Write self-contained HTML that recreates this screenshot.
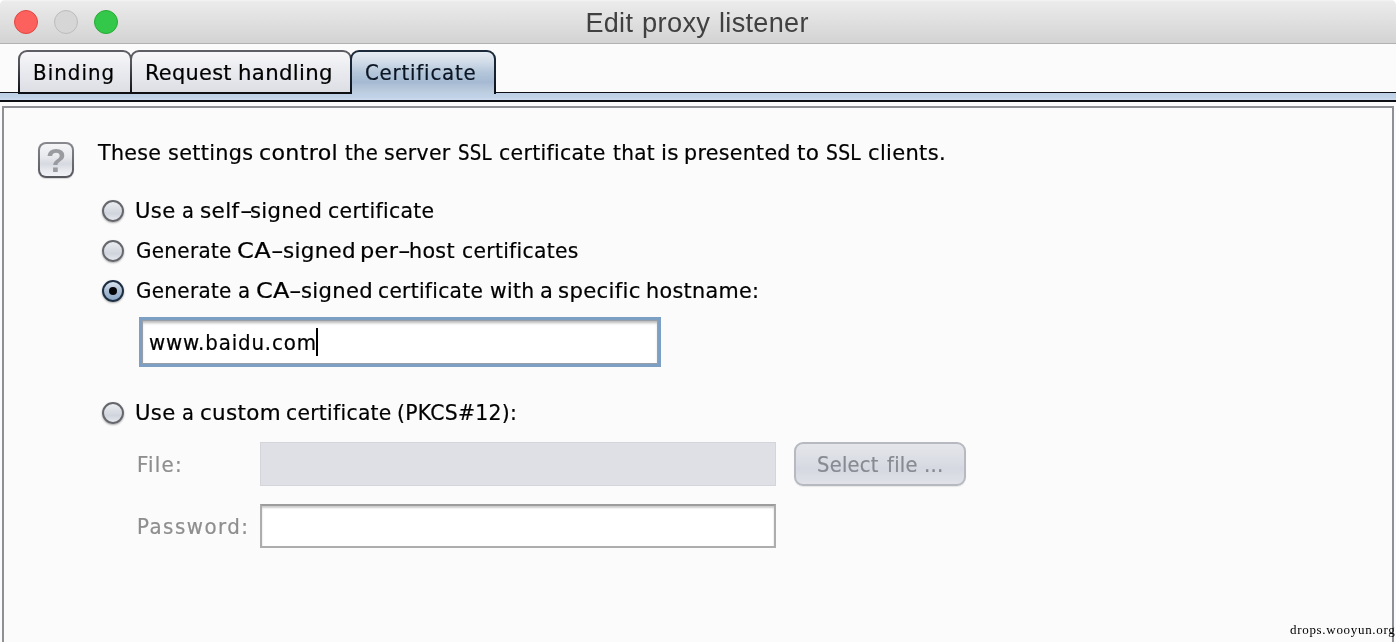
<!DOCTYPE html>
<html lang="en">
<head>
<meta charset="utf-8">
<title>Edit proxy listener</title>
<style>
html,body{margin:0;padding:0;}
body{width:1396px;height:642px;overflow:hidden;background:#fff;position:relative;
  font-family:"DejaVu Sans Condensed","Liberation Sans",sans-serif;font-size:22px;color:#000;}
#win{position:absolute;left:0;top:0;width:1396px;height:642px;background:#fbfbfb;border-radius:5px 5px 0 0;overflow:hidden;}
.abs{position:absolute;white-space:nowrap;}
.abs,.tab>span,#btn>span,#help span{will-change:transform;}
/* title bar */
#titlebar{position:absolute;left:0;top:0;width:1396px;height:43px;
  background:linear-gradient(#f4f4f4 0,#ebebeb 2px,#d3d3d3 100%);border-bottom:1px solid #b1b1b1;}
.light{position:absolute;top:10px;width:22px;height:22px;border-radius:50%;border:1px solid;}
#l-red{left:14px;background:#fc615d;border-color:#e1463f;}
#l-gray{left:54px;background:#d6d6d6;border-color:#bcbcbc;}
#l-green{left:94px;background:#34c84a;border-color:#27aa35;}
#title{top:6px;height:34px;line-height:34px;
  font-family:"Liberation Sans",sans-serif;font-size:27px;color:#404040;}
/* tabs */
.tab{position:absolute;top:50px;height:43px;box-sizing:border-box;border:2px solid transparent;border-bottom:none;
  border-radius:9px 9px 0 0;
  background:linear-gradient(#f7f7f9 0,#eaebef 45%,#dddee4 100%) padding-box,
             linear-gradient(#5d5f65 0,#54565c 30%,#2a2c32 70%,#0d0f14 100%) border-box;}
.tab>span{position:absolute;white-space:nowrap;top:7px;line-height:28px;}
#tab1{left:18px;width:114px;}
#tab2{left:130px;width:222px;}
#tab3{left:350px;width:146px;height:44px;color:#0a1422;
  background:linear-gradient(#e6ecf3 0,#d0dbe8 25%,#b3c5d9 50%,#a5bad2 72%,#b9c9dc 90%,#c0d0e3 100%) padding-box,
             linear-gradient(#1b2b3d 0,#16222f 60%,#0b0f16 100%) border-box;}
#tabline{position:absolute;left:0;top:92px;width:1396px;height:1px;background:#0d0f14;}
#tabline2{position:absolute;left:18px;top:93px;width:334px;height:1px;background:#0d0f14;}
#strip{position:absolute;left:0;top:93px;width:1396px;height:7px;background:linear-gradient(#bccfe5 0,#c1d2e7 60%,#cddaee 100%);}
#stripline{position:absolute;left:0;top:100px;width:1396px;height:2px;background:#0c0e14;}
#panel{position:absolute;left:2px;top:106px;width:1392px;height:560px;border:2px solid #8e9096;box-sizing:border-box;background:#fbfbfb;}
/* help button */
#help{position:absolute;left:38px;top:142px;width:36px;height:36px;box-sizing:border-box;border:2px solid transparent;border-radius:8px;
  background:linear-gradient(#f5f5f7 0,#e7e9ed 40%,#d6d9e0 62%,#e9ebf0 85%,#f1f2f6 100%) padding-box,
             linear-gradient(#888a90 0,#72747a 40%,#55575d 100%) border-box;box-shadow:0 1px 1px rgba(0,0,0,.15);}
#help span{position:absolute;left:0;right:0;top:1px;text-align:center;font-family:"Liberation Sans",sans-serif;font-weight:bold;font-size:33px;line-height:32px;color:#9a9ba0;filter:blur(.6px);}
/* radios */
.radio{position:absolute;left:102px;width:22px;height:22px;box-sizing:border-box;border:2px solid #65676d;border-radius:50%;
  background:linear-gradient(#eceef1 0,#dcdfe5 35%,#d0d4dc 65%,#e6e8ed 100%);box-shadow:0 1px 2px rgba(0,0,0,.32);}
.radio.on{border-color:#1d2e42;background:linear-gradient(#dbe4ee 0,#a9bdd3 50%,#8ca8c5 100%);}
.radio.on i{position:absolute;left:5px;top:5px;width:8px;height:8px;border-radius:50%;background:#050608;}
.lbl{line-height:28px;}
.lbl,.tab>span,#btn>span{-webkit-text-stroke:.22px currentColor;}
.dis{color:#8e8e8e;}
.w{position:absolute;top:0;transform-origin:0 50%;}
.hy{letter-spacing:0;}
/* fields */
#host{position:absolute;left:139px;top:317px;width:522px;height:50px;box-sizing:border-box;border:3px solid #7c9fc3;background:#fff;
  box-shadow:inset 0 0 0 1px #9a9ea6, inset 0 3px 3px rgba(0,0,0,.28);}
#caret{position:absolute;left:316px;top:328px;width:2px;height:28px;background:#000;}
#file{position:absolute;left:260px;top:442px;width:516px;height:44px;box-sizing:border-box;border:1px solid #d3d5da;background:#dee0e5;}
#pwd{position:absolute;left:260px;top:504px;width:516px;height:44px;box-sizing:border-box;border:2px solid #adadad;border-top-color:#9c9c9c;background:#fff;
  box-shadow:inset 0 2px 2px rgba(0,0,0,.2);}
#btn{position:absolute;left:794px;top:442px;width:172px;height:44px;box-sizing:border-box;border:2px solid #b7b9c1;border-radius:9px;
  background:linear-gradient(#e4e6eb 0,#d9dce3 50%,#d5d8e0 60%,#e0e2e8 100%);box-shadow:0 1px 1px rgba(0,0,0,.08);}
#btn>span{position:absolute;white-space:nowrap;top:7px;line-height:28px;color:#888a91;}
#wm{top:622px;font-family:"Liberation Serif",serif;font-size:13px;line-height:16px;color:#000;}
</style>
</head>
<body>
<div id="win">
  <div id="titlebar">
    <div class="light" id="l-red"></div>
    <div class="light" id="l-gray"></div>
    <div class="light" id="l-green"></div>
    <div class="abs" id="title" style="left:0px;letter-spacing:0.3px;"><span class="w" style="left:585.47px;transform:scaleX(1.000)">Edit</span> <span class="w" style="left:641.54px;transform:scaleX(1.012)">proxy</span> <span class="w" style="left:718.72px;transform:scaleX(1.003)">listener</span></div>
  </div>

  <div id="strip"></div>
  <div id="stripline"></div>
  <div class="tab" id="tab1"><span id="tb1" style="left:13.30px;letter-spacing:1.053px;">Binding</span></div>
  <div class="tab" id="tab2"><span id="tb2" style="left:0px;letter-spacing:0.3px;"><span class="w" style="left:13.47px;transform:scaleX(1.054)">Request</span> <span class="w" style="left:105.71px;transform:scaleX(1.074)">handling</span></span></div>
  <div id="tabline"></div>
  <div id="tabline2"></div>
  <div class="tab" id="tab3"><span id="tb3" style="left:13.44px;letter-spacing:0.793px;">Certificate</span></div>

  <div id="panel"></div>

  <div id="help"><span>?</span></div>
  <div class="abs lbl" id="t0" style="left:0px;letter-spacing:0.3px;top:139px;"><span class="w" style="left:97.91px;transform:scaleX(1.040)">These</span> <span class="w" style="left:168.37px;transform:scaleX(1.049)">settings</span> <span class="w" style="left:259.31px;transform:scaleX(1.118)">control</span> <span class="w" style="left:344.87px;transform:scaleX(0.987)">the</span> <span class="w" style="left:383.93px;transform:scaleX(1.032)">server</span> <span class="w" style="left:457.66px;transform:scaleX(0.914)">SSL</span> <span class="w" style="left:499.29px;transform:scaleX(1.033)">certificate</span> <span class="w" style="left:612.57px;transform:scaleX(1.012)">that</span> <span class="w" style="left:661.18px;transform:scaleX(1.094)">is</span> <span class="w" style="left:684.27px;transform:scaleX(1.040)">presented</span> <span class="w" style="left:797.25px;transform:scaleX(1.091)">to</span> <span class="w" style="left:826.20px;transform:scaleX(0.945)">SSL</span> <span class="w" style="left:868.09px;transform:scaleX(1.062)">clients.</span></div>

  <div class="radio" style="top:200px"></div>
  <div class="abs lbl" id="t1" style="left:0px;letter-spacing:0.3px;top:197px;"><span class="w" style="left:135.07px;transform:scaleX(1.069)">Use</span> <span class="w" style="left:182.21px;transform:scaleX(0.980)">a</span> <span class="w" style="left:200.05px;transform:scaleX(1.090)">self</span><span class="w hy" style="left:239.56px;transform:scaleX(1.774)">-</span><span class="w" style="left:249.99px;transform:scaleX(1.069)">signed</span> <span class="w" style="left:328.48px;transform:scaleX(1.032)">certificate</span></div>
  <div class="radio" style="top:240px"></div>
  <div class="abs lbl" id="t2" style="left:0px;letter-spacing:0.3px;top:237px;"><span class="w" style="left:135.80px;transform:scaleX(1.008)">Generate</span> <span class="w" style="left:237.45px;transform:scaleX(1.218)">CA</span><span class="w hy" style="left:271.00px;transform:scaleX(1.774)">-</span><span class="w" style="left:282.51px;transform:scaleX(1.082)">signed</span> <span class="w" style="left:360.18px;transform:scaleX(1.136)">per</span><span class="w hy" style="left:397.66px;transform:scaleX(1.774)">-</span><span class="w" style="left:409.27px;transform:scaleX(1.044)">host</span> <span class="w" style="left:462.39px;transform:scaleX(1.025)">certificates</span></div>
  <div class="radio on" style="top:280px"><i></i></div>
  <div class="abs lbl" id="t3" style="left:0px;letter-spacing:0.3px;top:277px;"><span class="w" style="left:135.80px;transform:scaleX(1.008)">Generate</span> <span class="w" style="left:237.64px;transform:scaleX(0.998)">a</span> <span class="w" style="left:255.91px;transform:scaleX(1.212)">CA</span><span class="w hy" style="left:289.04px;transform:scaleX(1.768)">-</span><span class="w" style="left:300.82px;transform:scaleX(1.068)">signed</span> <span class="w" style="left:378.40px;transform:scaleX(1.019)">certificate</span> <span class="w" style="left:490.14px;transform:scaleX(1.028)">with</span> <span class="w" style="left:540.08px;transform:scaleX(1.060)">a</span> <span class="w" style="left:557.98px;transform:scaleX(1.072)">specific</span> <span class="w" style="left:646.48px;transform:scaleX(1.047)">hostname:</span></div>

  <div id="host"></div>
  <div class="abs lbl" id="t4" style="left:149.17px;letter-spacing:0.859px;top:329px;">www.baidu.com</div>
  <div id="caret"></div>

  <div class="radio" style="top:402px"></div>
  <div class="abs lbl" id="t5" style="left:0px;letter-spacing:0.3px;top:399px;"><span class="w" style="left:135.07px;transform:scaleX(1.069)">Use</span> <span class="w" style="left:182.21px;transform:scaleX(0.980)">a</span> <span class="w" style="left:199.55px;transform:scaleX(1.084)">custom</span> <span class="w" style="left:286.38px;transform:scaleX(1.024)">certificate</span> <span class="w" style="left:397.27px;transform:scaleX(1.028)">(PKCS#12):</span></div>

  <div class="abs lbl dis" id="t6" style="left:136.70px;letter-spacing:1.259px;top:451px;">File:</div>
  <div id="file"></div>
  <div id="btn"><span id="t8" style="left:0px;letter-spacing:0.3px;"><span class="w" style="left:21.18px;transform:scaleX(0.982)">Select</span> <span class="w" style="left:91.16px;transform:scaleX(0.982)">file</span> <span class="w" style="left:127.59px;transform:scaleX(0.993)">...</span></span></div>
  <div class="abs lbl dis" id="t7" style="left:136.76px;letter-spacing:1.503px;top:513px;">Password:</div>
  <div id="pwd"></div>

  <div class="abs" id="wm" style="left:1289.69px;letter-spacing:0.693px;">drops.wooyun.org</div>
</div>
</body>
</html>
